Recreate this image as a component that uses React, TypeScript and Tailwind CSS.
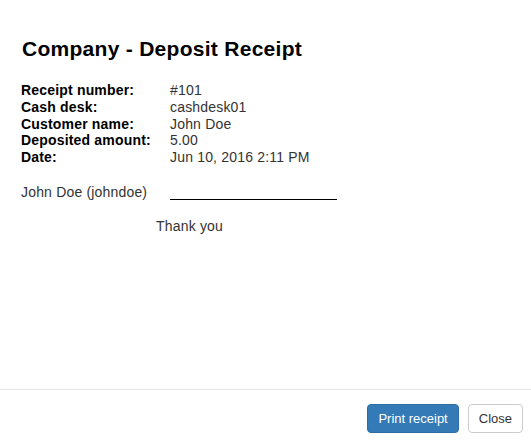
import React from 'react';

const rows = [
  { label: 'Receipt number:', value: '#101' },
  { label: 'Cash desk:', value: 'cashdesk01' },
  { label: 'Customer name:', value: 'John Doe' },
  { label: 'Deposited amount:', value: '5.00' },
  { label: 'Date:', value: 'Jun 10, 2016 2:11 PM' },
];

export default function App() {
  return (
    <div className="w-[531px] h-[443px] bg-white flex flex-col text-[14px] tracking-[0.18px] text-[#333] font-['Liberation_Sans',Arial,sans-serif]">
      {/* Receipt body */}
      <div className="flex-1 pl-[21px] pt-[37px]">
        <h1 className="text-[21px] leading-[24px] tracking-[0.28px] font-bold text-black pl-px">Company - Deposit Receipt</h1>

        <div className="mt-[21px] flex flex-col">
          {rows.map((r) => (
            <div key={r.label} className="flex h-[16.75px] leading-[16.75px]">
              <span className="w-[149px] font-bold text-black">{r.label}</span>
              <span>{r.value}</span>
            </div>
          ))}
        </div>

        <div className="mt-[18px] flex items-end h-[17px]">
          <span className="w-[149px] leading-[17px]">John Doe (johndoe)</span>
          <span className="w-[167px] border-b border-black mb-[1px]" />
        </div>

        <div className="mt-[17px] pl-[135px] leading-[17px]">Thank you</div>
      </div>

      {/* Footer */}
      <div className="h-[54px] border-t border-[#e5e5e5] flex items-start justify-end gap-[9px] pr-[8px] pt-[14px]">
        <button className="h-[29px] px-[10px] rounded-[4px] bg-[#337ab7] border border-[#2e6da4] text-white text-[13px] tracking-normal leading-[16px]">
          Print receipt
        </button>
        <button className="h-[29px] px-[10px] rounded-[4px] bg-white border border-[#ccc] text-[#333] text-[13px] tracking-normal leading-[16px]">
          Close
        </button>
      </div>
    </div>
  );
}
